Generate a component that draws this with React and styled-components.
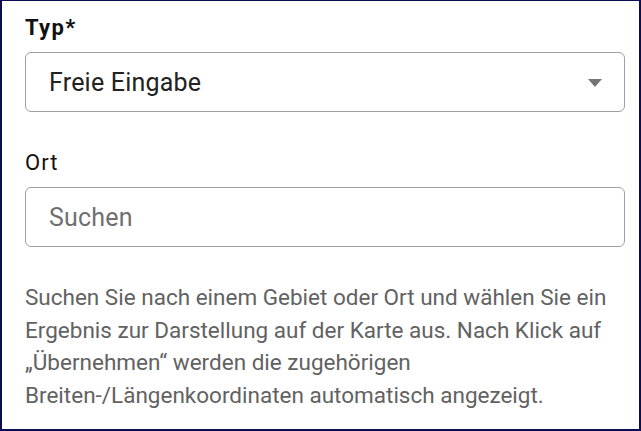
import styled, { createGlobalStyle } from "styled-components";

const GlobalStyle = createGlobalStyle`
  html, body {
    margin: 0;
    padding: 0;
    background: #fff;
  }
  body {
    font-family: Roboto, "Liberation Sans", sans-serif;
  }
  * {
    box-sizing: border-box;
  }
`;

const Frame = styled.div`
  width: 641px;
  height: 431px;
  border-style: solid;
  border-color: #0c0c50;
  border-width: 1px 2px 2px 2px;
  padding: 15px 14px 0 23px;
  display: flex;
  flex-direction: column;
  overflow: hidden;
`;

const Label = styled.label`
  display: block;
  font-size: 22px;
  line-height: 24px;
  letter-spacing: ${(p) => (p.$bold ? 1.3 : 1)}px;
  font-weight: ${(p) => (p.$bold ? 700 : 400)};
  color: #111;
  margin-top: ${(p) => p.$top || 0}px;
`;

const Box = styled.div`
  margin-top: 12px;
  height: 60px;
  border: 1px solid #a0a0a0;
  border-radius: 6px;
  display: flex;
  align-items: center;
  justify-content: space-between;
  padding: 0 22px 0 23px;
  font-size: 25px;
  letter-spacing: 0.2px;
  color: ${(p) => (p.$placeholder ? "#6f6f6f" : "#222")};
`;

const Arrow = styled.span`
  width: 0;
  height: 0;
  border-left: 7.5px solid transparent;
  border-right: 7.5px solid transparent;
  border-top: 8px solid #757575;
  margin-top: 1px;
`;

const Help = styled.p`
  margin: 34px 0 0;
  font-size: 22.5px;
  line-height: 32.7px;
  color: #626262;
`;

export default function App() {
  return (
    <>
      <GlobalStyle />
      <Frame>
        <Label $bold>Typ*</Label>
        <Box>
          <span>Freie Eingabe</span>
          <Arrow />
        </Box>
        <Label $top={39}>Ort</Label>
        <Box $placeholder>
          <span>Suchen</span>
        </Box>
        <Help>
          Suchen Sie nach einem Gebiet oder Ort und wählen Sie ein Ergebnis zur
          Darstellung auf der Karte aus. Nach Klick auf „Übernehmen“ werden die
          zugehörigen Breiten-/Längenkoordinaten automatisch angezeigt.
        </Help>
      </Frame>
    </>
  );
}
